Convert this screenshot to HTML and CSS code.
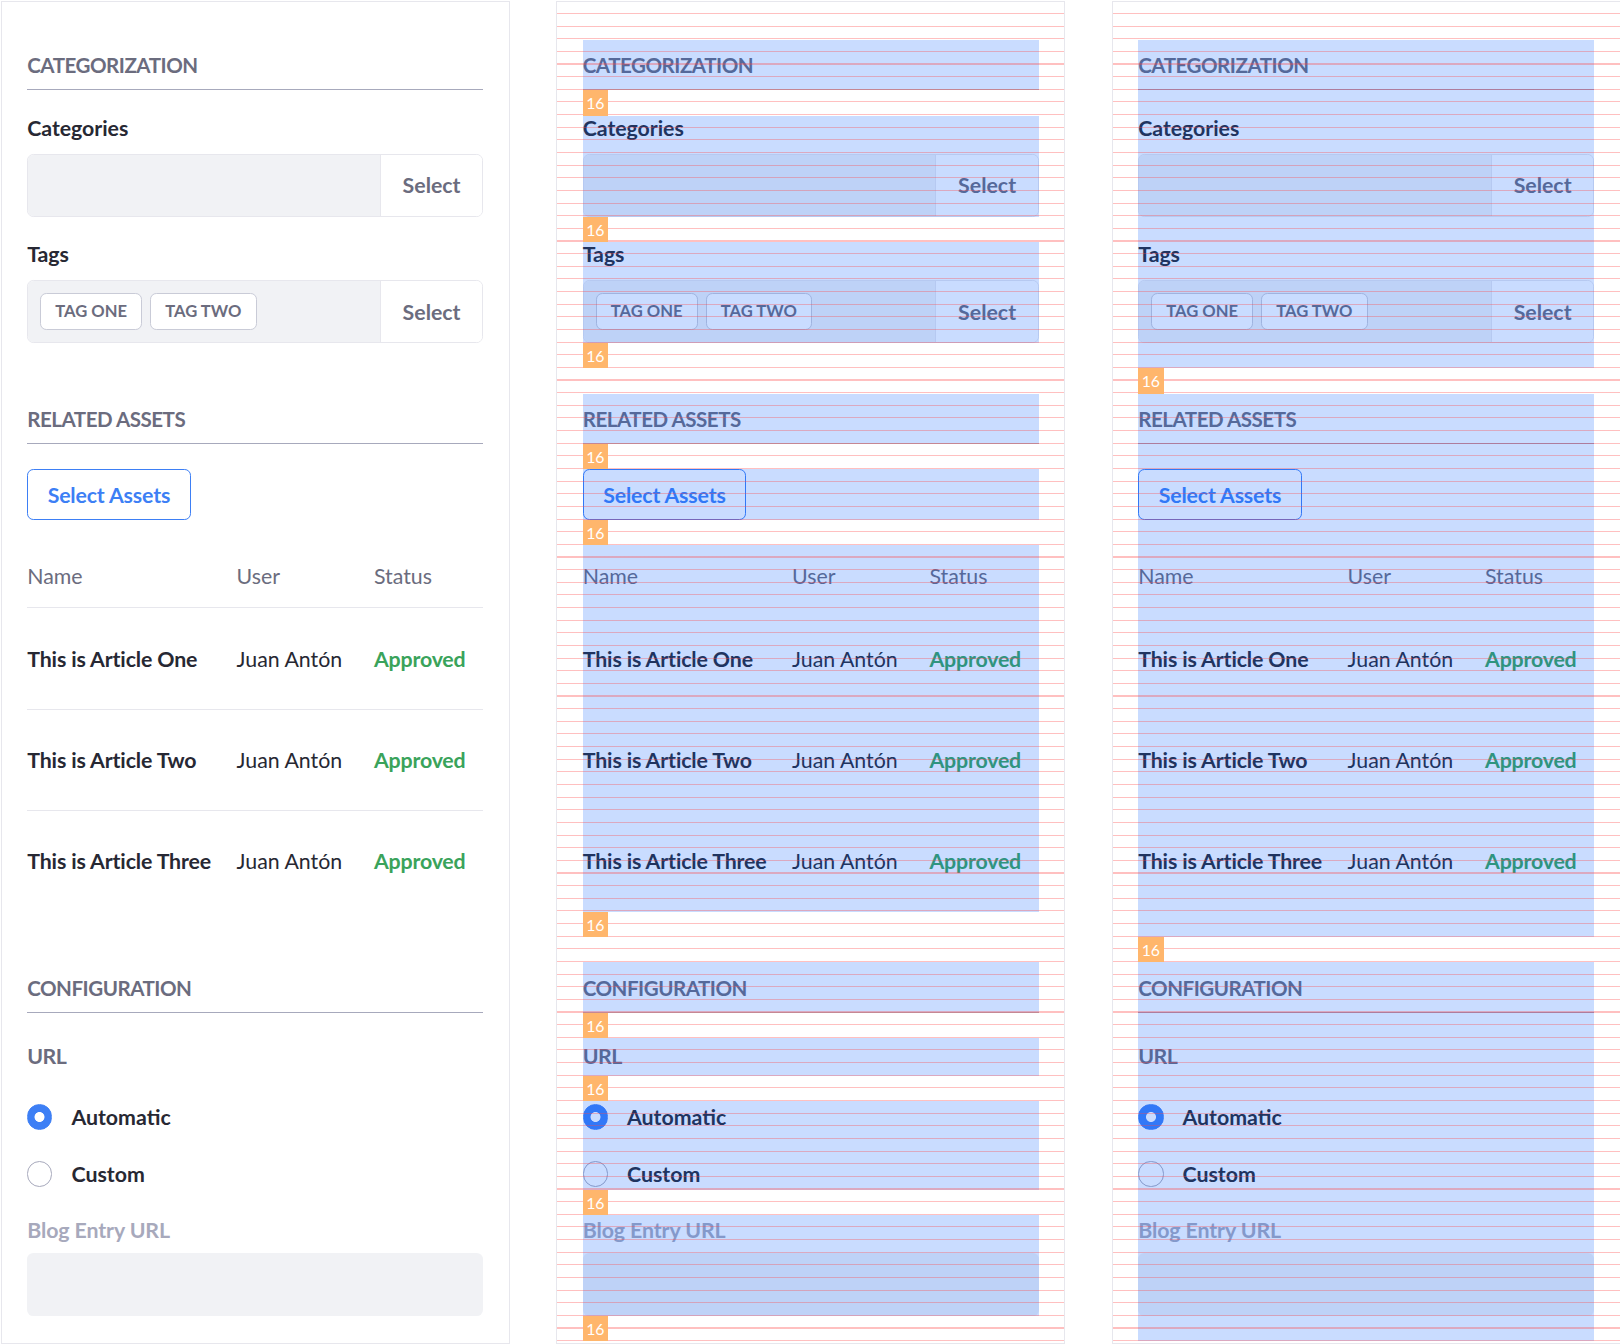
FILE: index.html
```html
<!DOCTYPE html>
<html lang="en">
<head>
<meta charset="utf-8">
<title>Sheet spacing</title>
<link rel="stylesheet" href="styles.css">
</head>
<body>
<div class="board">

  <section class="panel">
    <div class="sheet">
      <div class="section">
        <h3 class="subtitle item">Categorization</h3>
        <div class="form-group item">
          <label class="label">Categories</label>
          <div class="input-group">
            <div class="input-field"></div>
            <div class="addon">Select</div>
          </div>
        </div>
        <div class="form-group item">
          <label class="label">Tags</label>
          <div class="input-group">
            <div class="input-field"><span class="chip">Tag One</span><span class="chip">Tag Two</span></div>
            <div class="addon">Select</div>
          </div>
        </div>
      </div>
      <div class="section">
        <h3 class="subtitle item">Related Assets</h3>
        <div class="item"><button class="btn" type="button">Select Assets</button></div>
        <div class="table item">
          <div class="row row--head"><span>Name</span><span>User</span><span>Status</span></div>
          <div class="row"><span class="cell-name">This is Article One</span><span>Juan Antón</span><span class="cell-status">Approved</span></div>
          <div class="row"><span class="cell-name">This is Article Two</span><span>Juan Antón</span><span class="cell-status">Approved</span></div>
          <div class="row"><span class="cell-name">This is Article Three</span><span>Juan Antón</span><span class="cell-status">Approved</span></div>
        </div>
      </div>
      <div class="section">
        <h3 class="subtitle item">Configuration</h3>
        <div class="legend item">URL</div>
        <div class="radios item">
          <div class="radio"><span class="radio-mark radio-mark--on"></span>Automatic</div>
          <div class="radio"><span class="radio-mark"></span>Custom</div>
        </div>
        <div class="form-group item">
          <label class="label label--disabled">Blog Entry URL</label>
          <div class="input-disabled"></div>
        </div>
      </div>
    </div>
  </section>

  <section class="panel panel--grid panel--items">
    <div class="sheet">
      <div class="section">
        <h3 class="subtitle item">Categorization</h3>
        <div class="form-group item">
          <label class="label">Categories</label>
          <div class="input-group">
            <div class="input-field"></div>
            <div class="addon">Select</div>
          </div>
        </div>
        <div class="form-group item">
          <label class="label">Tags</label>
          <div class="input-group">
            <div class="input-field"><span class="chip">Tag One</span><span class="chip">Tag Two</span></div>
            <div class="addon">Select</div>
          </div>
        </div>
      </div>
      <div class="section">
        <h3 class="subtitle item">Related Assets</h3>
        <div class="item"><button class="btn" type="button">Select Assets</button></div>
        <div class="table item">
          <div class="row row--head"><span>Name</span><span>User</span><span>Status</span></div>
          <div class="row"><span class="cell-name">This is Article One</span><span>Juan Antón</span><span class="cell-status">Approved</span></div>
          <div class="row"><span class="cell-name">This is Article Two</span><span>Juan Antón</span><span class="cell-status">Approved</span></div>
          <div class="row"><span class="cell-name">This is Article Three</span><span>Juan Antón</span><span class="cell-status">Approved</span></div>
        </div>
      </div>
      <div class="section">
        <h3 class="subtitle item">Configuration</h3>
        <div class="legend item">URL</div>
        <div class="radios item">
          <div class="radio"><span class="radio-mark radio-mark--on"></span>Automatic</div>
          <div class="radio"><span class="radio-mark"></span>Custom</div>
        </div>
        <div class="form-group item">
          <label class="label label--disabled">Blog Entry URL</label>
          <div class="input-disabled"></div>
        </div>
      </div>
    </div>
  </section>

  <section class="panel panel--grid panel--sections">
    <div class="sheet">
      <div class="section">
        <h3 class="subtitle item">Categorization</h3>
        <div class="form-group item">
          <label class="label">Categories</label>
          <div class="input-group">
            <div class="input-field"></div>
            <div class="addon">Select</div>
          </div>
        </div>
        <div class="form-group item">
          <label class="label">Tags</label>
          <div class="input-group">
            <div class="input-field"><span class="chip">Tag One</span><span class="chip">Tag Two</span></div>
            <div class="addon">Select</div>
          </div>
        </div>
      </div>
      <div class="section">
        <h3 class="subtitle item">Related Assets</h3>
        <div class="item"><button class="btn" type="button">Select Assets</button></div>
        <div class="table item">
          <div class="row row--head"><span>Name</span><span>User</span><span>Status</span></div>
          <div class="row"><span class="cell-name">This is Article One</span><span>Juan Antón</span><span class="cell-status">Approved</span></div>
          <div class="row"><span class="cell-name">This is Article Two</span><span>Juan Antón</span><span class="cell-status">Approved</span></div>
          <div class="row"><span class="cell-name">This is Article Three</span><span>Juan Antón</span><span class="cell-status">Approved</span></div>
        </div>
      </div>
      <div class="section">
        <h3 class="subtitle item">Configuration</h3>
        <div class="legend item">URL</div>
        <div class="radios item">
          <div class="radio"><span class="radio-mark radio-mark--on"></span>Automatic</div>
          <div class="radio"><span class="radio-mark"></span>Custom</div>
        </div>
        <div class="form-group item">
          <label class="label label--disabled">Blog Entry URL</label>
          <div class="input-disabled"></div>
        </div>
      </div>
    </div>
  </section>

</div>
</body>
</html>
```

FILE: styles.css
```css
* { box-sizing: border-box; }

html, body {
  margin: 0;
  background: #ffffff;
}

body {
  font-family: Lato, "Noto Sans", sans-serif;
  color: #272833;
}

.board {
  zoom: 1.58;
  display: flex;
  align-items: flex-start;
  gap: 29.6px;
  padding: 0.6px 0 0 0.6px;
}

.panel {
  position: relative;
  flex: none;
  width: 322px;
  height: 850px;
  padding: 24px 16px 0;
  border: 1px solid #e7e7ed;
  background: #ffffff;
}

.sheet {
  display: flex;
  flex-direction: column;
  gap: 16px;
}

.section {
  position: relative;
  display: flex;
  flex-direction: column;
  gap: 16px;
  padding-bottom: 16px;
}

.item { position: relative; }

/* section title */
.subtitle {
  margin: 0;
  height: 32px;
  padding-top: 6.6px;
  border-bottom: 1px solid #a7a9bc;
  font-size: 13px;
  line-height: 20px;
  font-weight: 700;
  letter-spacing: -0.3px;
  color: #6b6c7e;
  text-transform: uppercase;
}

/* labels */
.label {
  display: block;
  height: 24px;
  padding-bottom: 8px;
  font-size: 13.5px;
  line-height: 16px;
  font-weight: 700;
  letter-spacing: -0.03px;
  color: #272833;
}

.label--disabled {
  padding-top: 2.2px;
  padding-bottom: 5.8px;
  letter-spacing: -0.06px;
  color: #a7a9bc;
}

/* input group */
.input-group {
  display: flex;
  height: 40px;
  border: 1px solid #e7e7ed;
  border-radius: 4px;
  overflow: hidden;
}

.input-field {
  flex: 1;
  display: flex;
  align-items: center;
  gap: 5px;
  padding: 0 7.5px;
  background: #f1f2f5;
}

.addon {
  flex: none;
  width: 65px;
  display: flex;
  align-items: center;
  justify-content: center;
  border-left: 1px solid #e7e7ed;
  background: #ffffff;
  font-size: 13.5px;
  font-weight: 700;
  color: #6b6c7e;
}

.chip {
  height: 24px;
  padding: 0 9px;
  border: 1px solid #c9cbd7;
  border-radius: 4px;
  background: #ffffff;
  font-size: 10.5px;
  line-height: 22px;
  font-weight: 700;
  letter-spacing: 0;
  color: #6b6c7e;
  text-transform: uppercase;
  white-space: nowrap;
}

/* button */
.btn {
  height: 32px;
  padding: 0 12.3px;
  border: 1px solid #3d7ff5;
  border-radius: 4px;
  background: #ffffff;
  font-family: inherit;
  font-size: 13.5px;
  font-weight: 700;
  letter-spacing: -0.1px;
  color: #3d7ff5;
}

/* table */
.row {
  display: grid;
  grid-template-columns: 132.5px 87px 1fr;
  align-items: center;
  height: 64px;
  border-bottom: 1px solid #e7e7ed;
  font-size: 13.5px;
  color: #272833;
  white-space: nowrap;
}

.row:last-child { border-bottom: 0; }

.row--head {
  height: 40px;
  color: #6b6c7e;
}

.cell-name {
  font-weight: 700;
  letter-spacing: -0.08px;
}

.cell-status {
  font-weight: 700;
  letter-spacing: -0.12px;
  color: #3aa35b;
}

/* radios */
.legend {
  height: 24px;
  font-size: 13.5px;
  line-height: 24px;
  font-weight: 700;
  letter-spacing: -0.3px;
  color: #6b6c7e;
}

.radios {
  display: flex;
  flex-direction: column;
  gap: 16px;
}

.radio {
  display: flex;
  align-items: center;
  gap: 12px;
  height: 20px;
  font-size: 13.5px;
  font-weight: 700;
  color: #272833;
}

.radio-mark {
  flex: none;
  width: 16px;
  height: 16px;
  border: 1px solid #a7a9bc;
  border-radius: 50%;
  background: #ffffff;
}

.radio-mark--on {
  border-color: #3d7ff5;
  background: radial-gradient(circle, #ffffff 0 2.9px, #3d7ff5 3.4px);
}

.input-disabled {
  height: 40px;
  border-radius: 4px;
  background: #f1f2f5;
}

/* ---------- spacing overlays ---------- */
.panel--items .table .row,
.panel--sections .table .row { border-bottom-color: transparent; }

.panel--grid::after {
  content: "";
  position: absolute;
  inset: 0;
  z-index: 2;
  pointer-events: none;
  background: repeating-linear-gradient(to bottom,
    transparent 0 6.9px,
    rgba(255, 70, 70, 0.34) 6.9px 7.6px,
    transparent 7.6px 8px);
}

.panel--items .item::after,
.panel--sections .section::before {
  content: "";
  position: absolute;
  inset: 0;
  z-index: 1;
  pointer-events: none;
  background: rgba(11, 95, 255, 0.22);
}

.panel--items .item + .item::before,
.panel--items .section::after,
.panel--sections .section + .section::after {
  content: "16";
  position: absolute;
  left: 0;
  z-index: 3;
  width: 16px;
  height: 16px;
  background: #ffb66c;
  color: #ffffff;
  font-size: 10px;
  line-height: 16px;
  font-weight: 400;
  text-align: center;
  text-transform: none;
  letter-spacing: 0;
}

.panel--items .item + .item::before { top: -16px; }
.panel--items .section::after { bottom: 0; }
.panel--sections .section + .section::after { top: -16px; }
```
